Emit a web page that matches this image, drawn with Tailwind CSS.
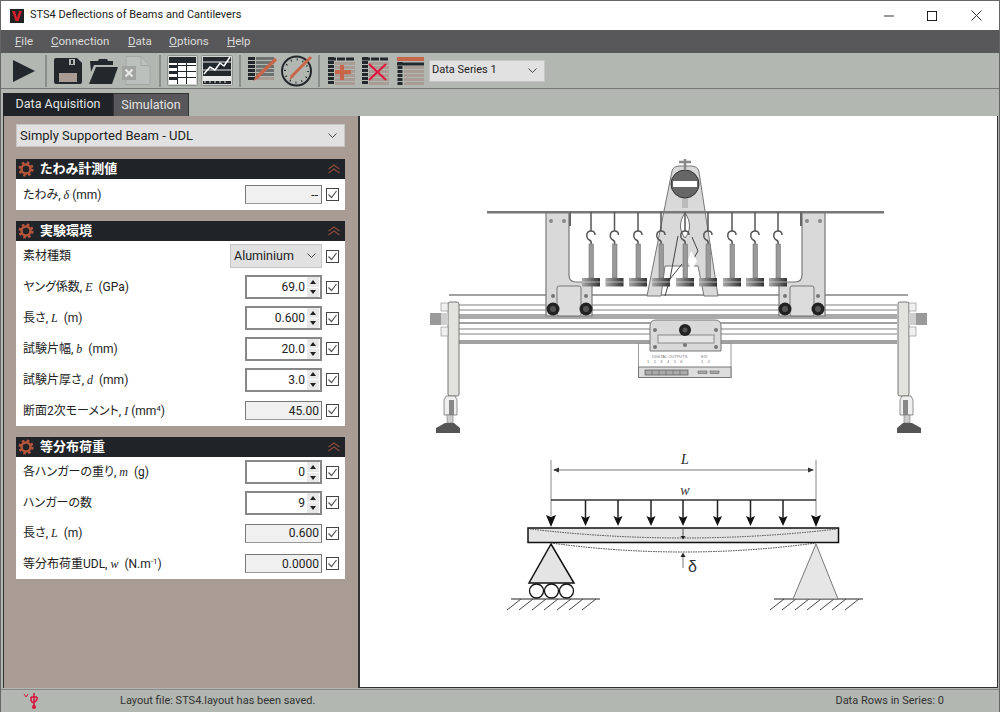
<!DOCTYPE html>
<html lang="en">
<head>
    <meta charset="UTF-8">
    <meta name="viewport" content="width=device-width, initial-scale=1.0">
    <script src="https://cdn.jsdelivr.net/npm/@tailwindcss/browser@4"></script>
    <title>STS4 Deflections of Beams and Cantilevers</title>
</head>
<body class="bg-white">
<div class="w-[1000px] h-[712px] flex flex-col overflow-hidden border-x border-t border-[#666] text-[12px] text-[#222] font-['Roboto','Noto_Sans_CJK_JP',sans-serif] [font-feature-settings:'palt']">

    <!-- title bar -->
    <div class="h-[29px] shrink-0 flex items-center bg-white">
        <div class="ml-[9px] w-[14px] h-[14px] bg-[#222] flex items-center justify-center">
            <svg width="12" height="12" viewBox="0 0 12 12"><path d="M1 1h3l2 7 2-7h3l-3.500 10h-3z" fill="#d2202c"/></svg>
        </div>
        <span class="ml-[6px] text-[11px]">STS4 Deflections of Beams and Cantilevers</span>
        <div class="ml-auto flex items-center">
            <svg class="mr-[33px]" width="10" height="10" viewBox="0 0 10 10"><path d="M0 5h10" stroke="#333" fill="none"/></svg>
            <svg class="mr-[34px]" width="10" height="10" viewBox="0 0 10 10"><rect x="0.500" y="0.500" width="9" height="9" stroke="#222" fill="none"/></svg>
            <svg class="mr-[17px]" width="11" height="11" viewBox="0 0 11 11"><path d="M0.500 0.500l10 10M10.500 0.500l-10 10" stroke="#333" fill="none"/></svg>
        </div>
    </div>

    <!-- menu -->
    <div class="h-[23px] shrink-0 flex items-center bg-[#58585a] text-[#dcdcdc] pl-[14px] text-[11.500px]">
        <span class="w-[36px]"><u>F</u>ile</span>
        <span class="w-[77px]"><u>C</u>onnection</span>
        <span class="w-[41px]"><u>D</u>ata</span>
        <span class="w-[58px]"><u>O</u>ptions</span>
        <span><u>H</u>elp</span>
    </div>

    <!-- toolbar -->
    <div class="h-[36px] shrink-0 flex items-center bg-[#b2b7b2] border-b border-[#777]">
        <svg class="ml-[12px]" width="23" height="24" viewBox="13 58 23 24"><path d="M13 59l22 11-22 11z" fill="#23282c"/></svg>
        <div class="ml-[9px] w-[2px] h-[32px] bg-[#8b8f8b]"></div>
        <svg class="ml-[7px]" width="29" height="28" viewBox="54 56 29 28">
            <path d="M54 59q0-2 2-2h21l5 5v19q0 2-2 2h-24q-2 0-2-2z" fill="#23282c"/>
            <rect x="59" y="72" width="18" height="9" fill="#a89c94"/>
            <rect x="69" y="58" width="6" height="6" fill="#b2b7b2"/>
            <rect x="71" y="59" width="2" height="4" fill="#23282c"/>
        </svg>
        <svg class="ml-[6px]" width="30" height="28" viewBox="89 56 30 28">
            <path d="M90 60h8l1-2h8l1 2h5v4h-19l-3 7z" fill="#23282c"/>
            <path d="M96 66h22l-6 17h-23z" fill="#23282c"/>
        </svg>
        <svg class="ml-[3px]" width="29" height="30" viewBox="122 56 29 30">
            <path d="M126 56.500h15l9 9v19h-24z" fill="#bcc0bc" stroke="#a4a8a4"/>
            <path d="M141 56.500v9h9" fill="none" stroke="#a4a8a4"/>
            <rect x="122" y="66" width="14" height="14" fill="#a0a3a0"/>
            <path d="M125.500 69.500l7 7M132.500 69.500l-7 7" stroke="#e6e6e6" stroke-width="2.200"/>
        </svg>
        <div class="ml-[8px] w-[2px] h-[32px] bg-[#8b8f8b]"></div>
        <svg class="ml-[6px]" width="31" height="31" viewBox="167 55 31 31">
            <rect x="167.500" y="55.500" width="30" height="30" rx="1" fill="#d2d5d2" stroke="#8b8f8b"/>
            <rect x="169" y="57" width="27" height="27" fill="#fff"/>
            <rect x="169" y="57" width="27" height="6" fill="#23282c"/>
            <path d="M169 66.500h8M169 72.500h8M169 78.500h8" stroke="#23282c" stroke-width="3"/>
            <path d="M177.500 63v21M186.500 57v27" stroke="#23282c" stroke-width="1"/>
            <path d="M178 65.500h18M178 71.500h18M178 77.500h18" stroke="#23282c" stroke-width="1"/>
        </svg>
        <svg class="ml-[3px]" width="32" height="31" viewBox="201 55 32 31">
            <rect x="201.500" y="55.500" width="31" height="30" rx="1" fill="#d2d5d2" stroke="#8b8f8b"/>
            <rect x="203" y="57" width="28" height="27" fill="#23282c"/>
            <path d="M203 62h28M203 70h28" stroke="#e8e8e8"/>
            <rect x="203" y="76" width="28" height="5" fill="#e8e8e8"/>
            <path d="M205 83v-2M210 83v-2M215 83v-2M220 83v-2M225 83v-2" stroke="#e8e8e8"/>
            <path d="M204 74l6-7 5 3 5-7 4 3 6-9" fill="none" stroke="#fff" stroke-width="1.500"/>
        </svg>
        <div class="ml-[6px] w-[2px] h-[32px] bg-[#8b8f8b]"></div>
        <svg class="ml-[7px]" width="30" height="28" viewBox="248 57 30 28">
            <path d="M251.500 57v24" stroke="#23282c" stroke-width="7" stroke-dasharray="3 1"/>
            <path d="M265 57v24" stroke="#6d7270" stroke-width="18" stroke-dasharray="3 1"/>
            <path d="M265 77v4" stroke="#a89c94" stroke-width="18" stroke-dasharray="3 1"/>
            <path d="M276 59l-20 19" stroke="#c8664a" stroke-width="3.500"/>
            <path d="M257 75l-4 6 6-3z" fill="#c8664a"/>
        </svg>
        <svg class="ml-[3px]" width="33" height="34" viewBox="281 54 33 34">
            <circle cx="296.500" cy="71" r="14.500" fill="none" stroke="#23282c" stroke-width="2"/>
            <circle cx="296.500" cy="71" r="11.500" fill="none" stroke="#23282c" stroke-width="2" stroke-dasharray="1 5"/>
            <path d="M311 57l-20 20" stroke="#c8664a" stroke-width="3"/>
            <path d="M292 74l-3 6 5-3z" fill="#c8664a"/>
        </svg>
        <div class="ml-[4px] w-[2px] h-[32px] bg-[#8b8f8b]"></div>
        <svg class="ml-[8px]" width="28" height="28" viewBox="328 57 28 28">
            <path d="M328 59h27" stroke="#23282c" stroke-width="3" stroke-dasharray="8 1"/>
            <path d="M331 57v28" stroke="#23282c" stroke-width="6" stroke-dasharray="3 1"/>
            <path d="M345 62v23" stroke="#a89c94" stroke-width="20" stroke-dasharray="3 1"/>
            <path d="M342 65v15M335 72h16" stroke="#c8664a" stroke-width="4"/>
        </svg>
        <svg class="ml-[6px]" width="28" height="28" viewBox="362 57 28 28">
            <path d="M362 59h27" stroke="#23282c" stroke-width="3" stroke-dasharray="8 1"/>
            <path d="M365 57v28" stroke="#23282c" stroke-width="6" stroke-dasharray="3 1"/>
            <path d="M379 62v23" stroke="#a89c94" stroke-width="20" stroke-dasharray="3 1"/>
            <path d="M369 64l17 16M386 64l-17 16" stroke="#e2133c" stroke-width="2"/>
        </svg>
        <svg class="ml-[7px]" width="28" height="28" viewBox="397 57 28 28">
            <rect x="397" y="57" width="27" height="4" fill="#c8664a"/>
            <path d="M397 64h27" stroke="#23282c" stroke-width="3"/>
            <path d="M400 62v23" stroke="#23282c" stroke-width="5" stroke-dasharray="3 1"/>
            <path d="M414 66v19" stroke="#a89c94" stroke-width="20" stroke-dasharray="3 1"/>
        </svg>
        <div class="ml-[4px] w-[116px] h-[22px] bg-[#e1e1e1] border border-[#c6c6c6] flex items-center pl-[2px] pr-[7px] justify-between text-[11px]">
            <span>Data Series 1</span>
            <svg width="9" height="6" viewBox="0 0 9 6"><path d="M0.500 0.500l4 4 4-4" fill="none" stroke="#444"/></svg>
        </div>
    </div>

    <!-- tabs -->
    <div class="h-[27px] shrink-0 flex items-end bg-[#b2b7b2] pl-[2px]">
        <div class="w-[110px] h-[23px] bg-[#202428] text-[#e4e4e4] flex items-center justify-center text-[12.500px]">Data Aquisition</div>
        <div class="w-[76px] h-[23px] bg-[#58585a] text-[#e4e4e4] flex items-center justify-center border border-[#333] border-b-0 text-[12.500px]">Simulation</div>
    </div>

    <!-- main -->
    <div class="h-[573px] shrink-0 flex bg-[#b2b7b2] pl-[2px]">
        <!-- left panel -->
        <div class="w-[355px] h-[572px] shrink-0 bg-[#a89c94] border-l border-[#333] pl-[12px] pr-[13px] pt-[8px]">
            <div class="w-[329px] h-[23px] bg-[#e1e1e1] border border-[#c6c6c6] flex items-center justify-between pl-[3px] pr-[7px] text-[13px]">
                <span>Simply Supported Beam - UDL</span>
                <svg width="9" height="6" viewBox="0 0 9 6"><path d="M0.500 0.500l4 4 4-4" fill="none" stroke="#444"/></svg>
            </div>

            <!-- section 1 -->
            <div class="mt-[12px] h-[20px] bg-[#202428] flex items-center text-white font-bold pl-[2px] pr-[5px] text-[13px]">
                <svg width="16" height="16" viewBox="0 0 16 16"><circle cx="8" cy="8" r="4.500" fill="none" stroke="#b5563c" stroke-width="2.500"/><circle cx="8" cy="8" r="6.300" fill="none" stroke="#b5563c" stroke-width="2.600" stroke-dasharray="2.500 2.450"/></svg>
                <span class="ml-[6px]">たわみ計測値</span>
                <svg class="ml-auto" width="12" height="10" viewBox="0 0 12 10"><path d="M0.500 5l5.500-4 5.500 4M0.500 9l5.500-4 5.500 4" fill="none" stroke="#8c4a3a" stroke-width="1.200"/></svg>
            </div>
            <div class="h-[31px] bg-white flex flex-col">
                <div class="flex-1 flex items-center pl-[7px] pr-[6px]">
                    <span>たわみ, <i class="font-['Liberation_Serif',serif]">δ</i> (mm)</span>
                    <div class="ml-auto w-[77px] h-[19px] bg-[#f0f0f0] border border-[#777] border-b-[#999] flex items-center justify-end pr-[3px]">--</div>
                    <svg class="ml-[4px]" width="13" height="13" viewBox="0 0 13 13"><rect x="0.500" y="0.500" width="12" height="12" fill="#fff" stroke="#444"/><path d="M2.500 6.500l3 3 5-6.500" fill="none" stroke="#555" stroke-width="1.200"/></svg>
                </div>
            </div>

            <!-- section 2 -->
            <div class="mt-[11px] h-[20px] bg-[#202428] flex items-center text-white font-bold pl-[2px] pr-[5px] text-[13px]">
                <svg width="16" height="16" viewBox="0 0 16 16"><circle cx="8" cy="8" r="4.500" fill="none" stroke="#b5563c" stroke-width="2.500"/><circle cx="8" cy="8" r="6.300" fill="none" stroke="#b5563c" stroke-width="2.600" stroke-dasharray="2.500 2.450"/></svg>
                <span class="ml-[6px]">実験環境</span>
                <svg class="ml-auto" width="12" height="10" viewBox="0 0 12 10"><path d="M0.500 5l5.500-4 5.500 4M0.500 9l5.500-4 5.500 4" fill="none" stroke="#8c4a3a" stroke-width="1.200"/></svg>
            </div>
            <div class="h-[185px] bg-white flex flex-col">
                <div class="flex-1 flex items-center pl-[7px] pr-[6px]">
                    <span>素材種類</span>
                    <div class="ml-auto w-[92px] h-[24px] bg-[#e1e1e1] border border-[#c6c6c6] flex items-center justify-between pl-[3px] pr-[5px] text-[12.500px]">
                        <span>Aluminium</span>
                        <svg width="9" height="6" viewBox="0 0 9 6"><path d="M0.500 0.500l4 4 4-4" fill="none" stroke="#444"/></svg>
                    </div>
                    <svg class="ml-[4px]" width="13" height="13" viewBox="0 0 13 13"><rect x="0.500" y="0.500" width="12" height="12" fill="#fff" stroke="#444"/><path d="M2.500 6.500l3 3 5-6.500" fill="none" stroke="#555" stroke-width="1.200"/></svg>
                </div>
                <div class="flex-1 flex items-center pl-[7px] pr-[6px]">
                    <span>ヤング係数, <i class="font-['Liberation_Serif',serif]">E</i> &nbsp;(GPa)</span>
                    <div class="ml-auto w-[77px] h-[24px] bg-white border-2 border-[#888] flex items-center justify-end pr-[1px]">
                        <span>69.0</span>
                        <div class="ml-[2px] w-[12px] h-[20px] flex flex-col gap-px">
                            <div class="flex-1 bg-[#e8e8e8] flex items-center justify-center"><svg width="6" height="4" viewBox="0 0 6 4"><path d="M3 0l3 4h-6z" fill="#222"/></svg></div>
                            <div class="flex-1 bg-[#e8e8e8] flex items-center justify-center"><svg width="6" height="4" viewBox="0 0 6 4"><path d="M0 0h6l-3 4z" fill="#222"/></svg></div>
                        </div>
                    </div>
                    <svg class="ml-[4px]" width="13" height="13" viewBox="0 0 13 13"><rect x="0.500" y="0.500" width="12" height="12" fill="#fff" stroke="#444"/><path d="M2.500 6.500l3 3 5-6.500" fill="none" stroke="#555" stroke-width="1.200"/></svg>
                </div>
                <div class="flex-1 flex items-center pl-[7px] pr-[6px]">
                    <span>長さ, <i class="font-['Liberation_Serif',serif]">L</i> &nbsp;(m)</span>
                    <div class="ml-auto w-[77px] h-[24px] bg-white border-2 border-[#888] flex items-center justify-end pr-[1px]">
                        <span>0.600</span>
                        <div class="ml-[2px] w-[12px] h-[20px] flex flex-col gap-px">
                            <div class="flex-1 bg-[#e8e8e8] flex items-center justify-center"><svg width="6" height="4" viewBox="0 0 6 4"><path d="M3 0l3 4h-6z" fill="#222"/></svg></div>
                            <div class="flex-1 bg-[#e8e8e8] flex items-center justify-center"><svg width="6" height="4" viewBox="0 0 6 4"><path d="M0 0h6l-3 4z" fill="#222"/></svg></div>
                        </div>
                    </div>
                    <svg class="ml-[4px]" width="13" height="13" viewBox="0 0 13 13"><rect x="0.500" y="0.500" width="12" height="12" fill="#fff" stroke="#444"/><path d="M2.500 6.500l3 3 5-6.500" fill="none" stroke="#555" stroke-width="1.200"/></svg>
                </div>
                <div class="flex-1 flex items-center pl-[7px] pr-[6px]">
                    <span>試験片幅, <i class="font-['Liberation_Serif',serif]">b</i> &nbsp;(mm)</span>
                    <div class="ml-auto w-[77px] h-[24px] bg-white border-2 border-[#888] flex items-center justify-end pr-[1px]">
                        <span>20.0</span>
                        <div class="ml-[2px] w-[12px] h-[20px] flex flex-col gap-px">
                            <div class="flex-1 bg-[#e8e8e8] flex items-center justify-center"><svg width="6" height="4" viewBox="0 0 6 4"><path d="M3 0l3 4h-6z" fill="#222"/></svg></div>
                            <div class="flex-1 bg-[#e8e8e8] flex items-center justify-center"><svg width="6" height="4" viewBox="0 0 6 4"><path d="M0 0h6l-3 4z" fill="#222"/></svg></div>
                        </div>
                    </div>
                    <svg class="ml-[4px]" width="13" height="13" viewBox="0 0 13 13"><rect x="0.500" y="0.500" width="12" height="12" fill="#fff" stroke="#444"/><path d="M2.500 6.500l3 3 5-6.500" fill="none" stroke="#555" stroke-width="1.200"/></svg>
                </div>
                <div class="flex-1 flex items-center pl-[7px] pr-[6px]">
                    <span>試験片厚さ, <i class="font-['Liberation_Serif',serif]">d</i> &nbsp;(mm)</span>
                    <div class="ml-auto w-[77px] h-[24px] bg-white border-2 border-[#888] flex items-center justify-end pr-[1px]">
                        <span>3.0</span>
                        <div class="ml-[2px] w-[12px] h-[20px] flex flex-col gap-px">
                            <div class="flex-1 bg-[#e8e8e8] flex items-center justify-center"><svg width="6" height="4" viewBox="0 0 6 4"><path d="M3 0l3 4h-6z" fill="#222"/></svg></div>
                            <div class="flex-1 bg-[#e8e8e8] flex items-center justify-center"><svg width="6" height="4" viewBox="0 0 6 4"><path d="M0 0h6l-3 4z" fill="#222"/></svg></div>
                        </div>
                    </div>
                    <svg class="ml-[4px]" width="13" height="13" viewBox="0 0 13 13"><rect x="0.500" y="0.500" width="12" height="12" fill="#fff" stroke="#444"/><path d="M2.500 6.500l3 3 5-6.500" fill="none" stroke="#555" stroke-width="1.200"/></svg>
                </div>
                <div class="flex-1 flex items-center pl-[7px] pr-[6px]">
                    <span>断面2次モーメント, <i class="font-['Liberation_Serif',serif]">I</i> (mm<sup class="text-[8px]">4</sup>)</span>
                    <div class="ml-auto w-[77px] h-[19px] bg-[#f0f0f0] border border-[#777] border-b-[#999] flex items-center justify-end pr-[2px]">45.00</div>
                    <svg class="ml-[4px]" width="13" height="13" viewBox="0 0 13 13"><rect x="0.500" y="0.500" width="12" height="12" fill="#fff" stroke="#444"/><path d="M2.500 6.500l3 3 5-6.500" fill="none" stroke="#555" stroke-width="1.200"/></svg>
                </div>
            </div>

            <!-- section 3 -->
            <div class="mt-[11px] h-[20px] bg-[#202428] flex items-center text-white font-bold pl-[2px] pr-[5px] text-[13px]">
                <svg width="16" height="16" viewBox="0 0 16 16"><circle cx="8" cy="8" r="4.500" fill="none" stroke="#b5563c" stroke-width="2.500"/><circle cx="8" cy="8" r="6.300" fill="none" stroke="#b5563c" stroke-width="2.600" stroke-dasharray="2.500 2.450"/></svg>
                <span class="ml-[6px]">等分布荷重</span>
                <svg class="ml-auto" width="12" height="10" viewBox="0 0 12 10"><path d="M0.500 5l5.500-4 5.500 4M0.500 9l5.500-4 5.500 4" fill="none" stroke="#8c4a3a" stroke-width="1.200"/></svg>
            </div>
            <div class="h-[122px] bg-white flex flex-col">
                <div class="flex-1 flex items-center pl-[7px] pr-[6px]">
                    <span>各ハンガーの重り, <i class="font-['Liberation_Serif',serif]">m</i> &nbsp;(g)</span>
                    <div class="ml-auto w-[77px] h-[24px] bg-white border-2 border-[#888] flex items-center justify-end pr-[1px]">
                        <span>0</span>
                        <div class="ml-[2px] w-[12px] h-[20px] flex flex-col gap-px">
                            <div class="flex-1 bg-[#e8e8e8] flex items-center justify-center"><svg width="6" height="4" viewBox="0 0 6 4"><path d="M3 0l3 4h-6z" fill="#222"/></svg></div>
                            <div class="flex-1 bg-[#e8e8e8] flex items-center justify-center"><svg width="6" height="4" viewBox="0 0 6 4"><path d="M0 0h6l-3 4z" fill="#222"/></svg></div>
                        </div>
                    </div>
                    <svg class="ml-[4px]" width="13" height="13" viewBox="0 0 13 13"><rect x="0.500" y="0.500" width="12" height="12" fill="#fff" stroke="#444"/><path d="M2.500 6.500l3 3 5-6.500" fill="none" stroke="#555" stroke-width="1.200"/></svg>
                </div>
                <div class="flex-1 flex items-center pl-[7px] pr-[6px]">
                    <span>ハンガーの数</span>
                    <div class="ml-auto w-[77px] h-[24px] bg-white border-2 border-[#888] flex items-center justify-end pr-[1px]">
                        <span>9</span>
                        <div class="ml-[2px] w-[12px] h-[20px] flex flex-col gap-px">
                            <div class="flex-1 bg-[#e8e8e8] flex items-center justify-center"><svg width="6" height="4" viewBox="0 0 6 4"><path d="M3 0l3 4h-6z" fill="#222"/></svg></div>
                            <div class="flex-1 bg-[#e8e8e8] flex items-center justify-center"><svg width="6" height="4" viewBox="0 0 6 4"><path d="M0 0h6l-3 4z" fill="#222"/></svg></div>
                        </div>
                    </div>
                    <svg class="ml-[4px]" width="13" height="13" viewBox="0 0 13 13"><rect x="0.500" y="0.500" width="12" height="12" fill="#fff" stroke="#444"/><path d="M2.500 6.500l3 3 5-6.500" fill="none" stroke="#555" stroke-width="1.200"/></svg>
                </div>
                <div class="flex-1 flex items-center pl-[7px] pr-[6px]">
                    <span>長さ, <i class="font-['Liberation_Serif',serif]">L</i> &nbsp;(m)</span>
                    <div class="ml-auto w-[77px] h-[19px] bg-[#f0f0f0] border border-[#777] border-b-[#999] flex items-center justify-end pr-[2px]">0.600</div>
                    <svg class="ml-[4px]" width="13" height="13" viewBox="0 0 13 13"><rect x="0.500" y="0.500" width="12" height="12" fill="#fff" stroke="#444"/><path d="M2.500 6.500l3 3 5-6.500" fill="none" stroke="#555" stroke-width="1.200"/></svg>
                </div>
                <div class="flex-1 flex items-center pl-[7px] pr-[6px]">
                    <span>等分布荷重UDL, <i class="font-['Liberation_Serif',serif]">w</i> &nbsp;(N.m<sup class="text-[8px]">-1</sup>)</span>
                    <div class="ml-auto w-[77px] h-[19px] bg-[#f0f0f0] border border-[#777] border-b-[#999] flex items-center justify-end pr-[2px]">0.0000</div>
                    <svg class="ml-[4px]" width="13" height="13" viewBox="0 0 13 13"><rect x="0.500" y="0.500" width="12" height="12" fill="#fff" stroke="#444"/><path d="M2.500 6.500l3 3 5-6.500" fill="none" stroke="#555" stroke-width="1.200"/></svg>
                </div>
            </div>
        </div>

        <!-- diagram -->
        <div class="w-[640px] h-[572px] shrink-0 bg-white border-x border-b border-[#333] border-l-2">
            <svg width="637" height="571" viewBox="360 117 637 571">
                <defs>
                    <linearGradient id="wt" x1="0" x2="1" y1="0" y2="0">
                        <stop offset="0" stop-color="#aaa"/><stop offset="1" stop-color="#333"/>
                    </linearGradient>
                    <g id="hanger">
                        <path d="M0 213v19" stroke="#555" stroke-width="1.500" fill="none"/>
                        <path d="M0 232c-5 0-5 6-3 8s4 1 3 5" stroke="#555" stroke-width="1.500" fill="none"/>
                        <path d="M0 232c3 0 4 2 4 4" stroke="#555" stroke-width="1.500" fill="none"/>
                        <rect x="-2" y="245" width="4.500" height="34" fill="#9a9a9a" stroke="#666" stroke-width="0.500"/>
                        <rect x="-9" y="279" width="18" height="8.500" fill="url(#wt)"/>
                        <path d="M-9 283h18" stroke="#ddd" stroke-width="0.700"/>
                    </g>
                    <g id="bracket">
                        <path d="M546 214h23v62q0 7 7 7h16v34h-46z" fill="#d9d9d9" stroke="#777" stroke-width="1.200"/>
                        <rect x="557" y="287" width="24" height="30" rx="2" fill="#dcdcdc" stroke="#777"/>
                        <circle cx="551" cy="222" r="2" fill="#888"/><circle cx="564" cy="222" r="2" fill="#888"/>
                        <circle cx="553" cy="297" r="2" fill="#777"/><circle cx="586" cy="297" r="2" fill="#777"/>
                        <circle cx="553" cy="310" r="6.500" fill="#222"/><circle cx="553" cy="310" r="3" fill="#555"/>
                        <circle cx="586" cy="310" r="6.500" fill="#222"/><circle cx="586" cy="310" r="3" fill="#555"/>
                        <rect x="569" y="213" width="2" height="14" fill="#666"/>
                    </g>
                    <g id="foot">
                        <rect x="448" y="303" width="11" height="94" rx="2" fill="#e2e3df" stroke="#777"/>
                        <rect x="430" y="314" width="11" height="12" fill="#9a9a9a"/>
                        <rect x="441" y="314" width="7" height="12" fill="#cfcfcf"/>
                        <rect x="441" y="304" width="7" height="8" fill="#f0f0f0" stroke="#888" stroke-width="0.600"/>
                        <rect x="441" y="328" width="7" height="9" fill="#f0f0f0" stroke="#888" stroke-width="0.600"/>
                        <path d="M446 397h9l2 4v15h-13v-15z" fill="#efefef" stroke="#777" stroke-width="0.800"/>
                        <rect x="449" y="401" width="5" height="15" fill="#888"/>
                        <rect x="447" y="416" width="6" height="8" fill="#ccc" stroke="#777" stroke-width="0.600"/>
                        <path d="M445 424h9l6 5v5h-24v-5z" fill="#555"/>
                    </g>
                </defs>

                <!-- frame rails -->
                <path d="M449 296h459" stroke="#444" stroke-width="1.200" fill="none"/>
                <rect x="459" y="297" width="438" height="47" fill="#fff"/>
                <path d="M459 306h438M459 311h438" stroke="#aaa" stroke-width="1.500"/>
                <rect x="459" y="315" width="438" height="5" fill="#aaa"/>
                <path d="M459 324h438" stroke="#444" stroke-width="1.200"/>
                <path d="M459 330h438M459 335h438" stroke="#aaa" stroke-width="1.500"/>
                <path d="M459 342h438M459 344h438" stroke="#444"/>
                <use href="#foot"/>
                <use href="#foot" transform="translate(1357 0) scale(-1 1)"/>

                <!-- top rod and gauge frame -->
                <path d="M672 172q1-5 8-5h11q7 0 8 6l19 124h-14l-6-30h-33l-4 30h-14z" fill="#d9d9d9" stroke="#777"/>
                <path d="M678 237l-8 43-5 17M670 280l12-15M692 238l6 14-8 14" fill="none" stroke="#444"/>
                <path d="M685 214c-6 8-6 18 0 25 6-7 6-17 0-25z" fill="#fff" stroke="#666"/>
                <path d="M691 252l6 10-6 10-3-10z" fill="#fff"/>
                <rect x="487" y="212" width="397" height="2.500" fill="#777"/>
                <use href="#bracket"/>
                <use href="#bracket" transform="translate(1371 0) scale(-1 1)"/>
                <use href="#hanger" x="591"/><use href="#hanger" x="614.500"/><use href="#hanger" x="638"/>
                <use href="#hanger" x="661"/><use href="#hanger" x="685"/><use href="#hanger" x="708"/>
                <use href="#hanger" x="732"/><use href="#hanger" x="755"/><use href="#hanger" x="778"/>
                <path d="M685 160v10M679 163h12" stroke="#888" stroke-width="2.500"/>
                <rect x="682" y="198" width="6" height="11" fill="#bbb"/>
                <circle cx="685" cy="185" r="14" fill="#666" stroke="#333"/>
                <rect x="673" y="182" width="24" height="6" fill="#fff"/>

                <!-- meter -->
                <rect x="638.500" y="344.500" width="92.500" height="34" fill="#fff" stroke="#999"/>
                <rect x="638.500" y="368" width="92.500" height="10.500" fill="#ddd" stroke="#777"/>
                <rect x="645" y="371" width="43" height="5" fill="#aaa" stroke="#555" stroke-width="0.700"/>
                <path d="M652 371v5M659 371v5M666 371v5M673 371v5M680 371v5" stroke="#555" stroke-width="0.500"/>
                <rect x="698" y="372" width="9" height="2.500" fill="#aaa" stroke="#555" stroke-width="0.500"/>
                <rect x="710" y="372" width="9" height="2.500" fill="#aaa" stroke="#555" stroke-width="0.500"/>
                <text x="652" y="359" font-size="4" fill="#777" font-family="Liberation Sans">DIGITAL OUTPUTS</text>
                <text x="647" y="364" font-size="4" fill="#777" font-family="Liberation Sans" xml:space="preserve">1    2    3    4    5    6</text>
                <text x="701" y="359" font-size="4" fill="#777" font-family="Liberation Sans">EXI</text>
                <text x="701" y="364" font-size="4" fill="#777" font-family="Liberation Sans" xml:space="preserve">1    2</text>
                <path d="M650 345v-18q0-6 6-6h59q6 0 6 6v25h-71z" fill="#d9d9d9" stroke="#777"/>
                <rect x="658" y="336" width="56" height="8" fill="#e4e4e4" stroke="#888"/>
                <circle cx="685" cy="331" r="6" fill="#222"/><circle cx="685" cy="331" r="2.500" fill="#555"/>
                <circle cx="655" cy="331" r="2" fill="#777"/><circle cx="716" cy="331" r="2" fill="#777"/>
                <circle cx="655" cy="348" r="2" fill="#777"/><circle cx="685" cy="346" r="2" fill="#777"/><circle cx="716" cy="348" r="2" fill="#777"/>

                <!-- beam diagram -->
                <text x="685" y="465" text-anchor="middle" font-size="14" font-style="italic" font-family="Liberation Serif" fill="#222">L</text>
                <text x="685" y="496" text-anchor="middle" font-size="14" font-style="italic" font-family="Liberation Serif" fill="#333">w</text>
                <path d="M551 461v56M816 461v56" stroke="#888" stroke-width="1" fill="none"/>
                <path d="M554 471h259" stroke="#777" fill="none"/>
                <path d="M553 471l6-2.500v5zM814 471l-6-2.500v5z" fill="#333"/>
                <path d="M551 501h265" stroke="#333" stroke-width="1.500"/>
                <path d="M585.500 501v20M618 501v20M651 501v20M683 501v20M717.500 501v20M750.500 501v20M783 501v20" stroke="#222" stroke-width="1.500"/>
                <path d="M581 517l4.500 2 4.500-2-4.500 10zM613.500 517l4.500 2 4.500-2-4.500 10zM646.500 517l4.500 2 4.500-2-4.500 10zM678.500 517l4.500 2 4.500-2-4.500 10zM713 517l4.500 2 4.500-2-4.500 10zM746 517l4.500 2 4.500-2-4.500 10zM778.500 517l4.500 2 4.500-2-4.500 10z" fill="#111"/>
                <path d="M546 516l5 2 5-2-5 12zM811 516l5 2 5-2-5 12z" fill="#111"/>
                <rect x="528" y="529" width="310.500" height="14.500" fill="#e4e4e4" stroke="#111" stroke-width="1.500"/>
                <path d="M530 530q153 18 307 0" fill="none" stroke="#444" stroke-dasharray="1.500 1"/>
                <path d="M551 544q132 18 265 0" fill="none" stroke="#333" stroke-dasharray="1.500 1"/>
                <path d="M683 530v8" stroke="#555"/>
                <path d="M680.500 537h5l-2.500 3.500z" fill="#222"/>
                <path d="M683 569v-12" stroke="#777"/>
                <path d="M680.500 558h5l-2.500-4.500z" fill="#222"/>
                <text x="688" y="573" font-size="16" font-family="Liberation Sans" fill="#333">δ</text>
                <path d="M551 545l-22 39h45z" fill="#e4e4e4" stroke="#111" stroke-width="1.500"/>
                <circle cx="536.500" cy="592" r="7" fill="#fff" stroke="#111" stroke-width="1.300"/>
                <circle cx="551.500" cy="592" r="7" fill="#fff" stroke="#111" stroke-width="1.300"/>
                <circle cx="566.500" cy="592" r="7" fill="#fff" stroke="#111" stroke-width="1.300"/>
                <path d="M511 600h89M774 600h89" stroke="#222"/>
                <path d="M521 600l-14 11M533 600l-14 11M546 600l-14 11M558 600l-14 11M571 600l-14 11M583 600l-14 11M596 600l-14 11" stroke="#444" fill="none"/>
                <path d="M784 600l-14 11M796 600l-14 11M809 600l-14 11M821 600l-14 11M834 600l-14 11M846 600l-14 11M859 600l-14 11" stroke="#444" fill="none"/>
                <path d="M816 545l-23 55h45z" fill="#e6e6e6" stroke="#777"/>
            </svg>
        </div>
    </div>

    <!-- status bar -->
    <div class="flex-1 flex items-center bg-[#b2b7b2] border-t border-[#888] text-[#333] text-[11px]">
        <svg class="ml-[22px]" width="18" height="18" viewBox="0 0 18 18">
            <path d="M1 2l2 3 2-3" fill="none" stroke="#d9143c"/>
            <path d="M11 1v14M8 5h6M8 5v3q0 2 3 3M14 5v2q0 2-3 3" fill="none" stroke="#d9143c" stroke-width="1.500"/>
            <circle cx="11" cy="15" r="2" fill="#d9143c"/>
        </svg>
        <span class="ml-[79px]">Layout file: STS4.layout has been saved.</span>
        <span class="ml-auto mr-[55px]">Data Rows in Series: 0</span>
    </div>
</div>
</body>
</html>
